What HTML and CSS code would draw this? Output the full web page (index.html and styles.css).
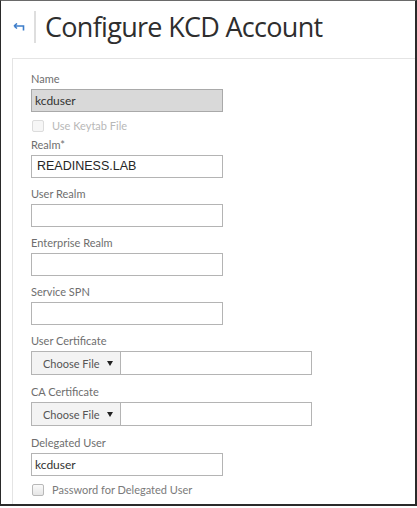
FILE: index.html
```html
<!DOCTYPE html>
<html>
<head>
<meta charset="utf-8">
<link rel="stylesheet" href="styles.css">
</head>
<body>
<div class="frame">
  <div class="header">
    <span class="back">
      <svg width="12" height="8" viewBox="0 0 12 8"><path d="M1 3 L4 0.5 M1 3 L4 5.5 M1 3 H10.5 V7.5" fill="none" stroke="#3d7dca" stroke-width="1.6"/></svg>
    </span>
    <span class="divider"></span>
    <h1 class="title">Configure KCD Account</h1>
  </div>
  <div class="panel">
    <div class="field">
      <div class="label">Name</div>
      <div class="input disabled">kcduser</div>
    </div>
    <div class="check disabled-check">
      <span class="box"></span><span class="check-text">Use Keytab File</span>
    </div>
    <div class="field">
      <div class="label">Realm*</div>
      <div class="input arial">READINESS.LAB</div>
    </div>
    <div class="field">
      <div class="label">User Realm</div>
      <div class="input"></div>
    </div>
    <div class="field">
      <div class="label">Enterprise Realm</div>
      <div class="input"></div>
    </div>
    <div class="field">
      <div class="label">Service SPN</div>
      <div class="input"></div>
    </div>
    <div class="field file-field">
      <div class="label">User Certificate</div>
      <div class="file">
        <div class="choose">Choose File<span class="tri"></span></div>
        <div class="file-name"></div>
      </div>
    </div>
    <div class="field file-field">
      <div class="label">CA Certificate</div>
      <div class="file">
        <div class="choose">Choose File<span class="tri"></span></div>
        <div class="file-name"></div>
      </div>
    </div>
    <div class="field">
      <div class="label">Delegated User</div>
      <div class="input">kcduser</div>
    </div>
    <div class="check">
      <span class="box"></span><span class="check-text">Password for Delegated User</span>
    </div>
  </div>
</div>
</body>
</html>
```
FILE: styles.css
```css
html, body {
  margin: 0;
  padding: 0;
  background: #fff;
}
.frame {
  width: 417px;
  height: 506px;
  box-sizing: border-box;
  border-left: 1px solid #2a2a2a;
  border-top: 1px solid #6a6a6a;
  border-right: 2px solid #2a2a2a;
  border-bottom: 2px solid #2a2a2a;
  display: flex;
  flex-direction: column;
  overflow: hidden;
  font-family: "Lato", "Open Sans", sans-serif;
}
.header {
  height: 57px;
  display: flex;
  align-items: flex-start;
  flex-shrink: 0;
}
.back {
  margin-left: 12px;
  margin-top: 22px;
  width: 12px;
  height: 8px;
  display: flex;
}
.divider {
  width: 2px;
  height: 32px;
  margin-top: 10px;
  margin-left: 9px;
  background: #dedede;
}
.title {
  margin: 6px 0 0 9px;
  font-family: "Open Sans", "Noto Sans", sans-serif;
  font-weight: 400;
  font-size: 27px;
  letter-spacing: -0.7px;
  line-height: 40px;
  color: #2e2e2e;
  white-space: nowrap;
}
.panel {
  flex: 1;
  margin-left: 11px;
  border-left: 1px solid #e4e4e4;
  border-top: 1px solid #e4e4e4;
  padding: 12px 0 0 18px;
}
.field {
  margin-bottom: 8px;
}
.file-field {
  margin-bottom: 9px;
}
.label {
  font-size: 11px;
  line-height: 16px;
  color: #6e6e6e;
  margin-bottom: 2px;
}
.input {
  width: 192px;
  height: 23px;
  box-sizing: border-box;
  border: 1px solid #b4b4b4;
  background: #fff;
  font-size: 12px;
  line-height: 21px;
  color: #333;
  padding-left: 3px;
}
.input.disabled {
  background: #d9d9d9;
  border-color: #a9a9a9;
}
.input.arial {
  font-family: "Liberation Sans", Arial, sans-serif;
  font-size: 12.5px;
  color: #262626;
  padding-left: 5px;
}
.check {
  display: flex;
  align-items: center;
  height: 19px;
  margin-top: -4px;
}
.disabled-check {
  margin-bottom: 2px;
}
.box {
  width: 10px;
  height: 10px;
  border: 1px solid #b8b8b8;
  border-radius: 2px;
  background: linear-gradient(#fafafa, #e6e6e6);
  margin-left: 1px;
}
.check-text {
  font-size: 11px;
  color: #7a7a7a;
  margin-left: 8px;
}
.disabled-check .box {
  border-color: #dcdcdc;
  background: #f6f6f6;
}
.disabled-check .check-text {
  color: #b8b8b8;
}
.file {
  display: flex;
  width: 281px;
  height: 24px;
  box-sizing: border-box;
  border: 1px solid #b4b4b4;
}
.choose {
  width: 89px;
  border-right: 1px solid #b4b4b4;
  background: #f3f3f3;
  font-size: 11px;
  color: #555;
  padding-left: 11px;
  box-sizing: border-box;
  display: flex;
  align-items: center;
}
.tri {
  width: 0;
  height: 0;
  border-left: 3.5px solid transparent;
  border-right: 3.5px solid transparent;
  border-top: 5px solid #222;
  margin-left: 7px;
}
.file-name {
  flex: 1;
  background: #fff;
}
```
